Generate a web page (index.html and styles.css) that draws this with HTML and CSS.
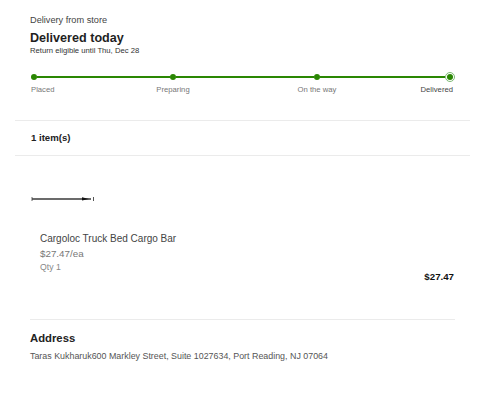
FILE: index.html
```html
<!DOCTYPE html>
<html>
<head>
<meta charset="utf-8">
<link rel="stylesheet" href="styles.css">
</head>
<body>
<div class="page">
  <div class="header">
    <div class="from">Delivery from store</div>
    <div class="title">Delivered today</div>
    <div class="return">Return eligible until Thu, Dec 28</div>
    <div class="tracker">
      <span class="dot c1"></span><span class="line c2"></span>
      <span class="dot c3"></span><span class="line c4"></span>
      <span class="dot c5"></span><span class="line c6"></span>
      <span class="ring c7"><span class="inner"></span></span>
      <span class="lbl c1 start">Placed</span>
      <span class="lbl c3 center">Preparing</span>
      <span class="lbl c5 center">On the way</span>
      <span class="lbl c7 end current">Delivered</span>
    </div>
  </div>
  <div class="count">1 item(s)</div>
  <div class="item">
    <svg class="thumb" width="64" height="10" viewBox="0 0 64 10">
      <line x1="1" y1="3" x2="1" y2="7" stroke="#666" stroke-width="1"/>
      <line x1="1" y1="5" x2="60" y2="5" stroke="#3a3a3a" stroke-width="1.4"/>
      <polygon points="51,3.2 58,5 51,6.4" fill="#111"/>
      <line x1="62.5" y1="3" x2="62.5" y2="7" stroke="#555" stroke-width="1"/>
    </svg>
    <div class="row">
      <div class="details">
        <div class="name">Cargoloc Truck Bed Cargo Bar</div>
        <div class="each">$27.47/ea</div>
        <div class="qty">Qty 1</div>
      </div>
      <div class="total">$27.47</div>
    </div>
  </div>
  <div class="address">
    <div class="addr-title">Address</div>
    <div class="addr-line">Taras Kukharuk600 Markley Street, Suite 1027634, Port Reading, NJ 07064</div>
  </div>
</div>
</body>
</html>
```

FILE: styles.css
```css
* { box-sizing: border-box; }
body {
  margin: 0;
  background: #fff;
  font-family: "Liberation Sans", Arial, sans-serif;
  color: #333;
}
.page {
  width: 455px;
  margin-left: 15px;
}
.header {
  padding: 13px 15px 0 15px;
}
.from {
  font-size: 9.2px;
  line-height: 14px;
  color: #444;
}
.title {
  margin-top: 3px;
  font-size: 12.6px;
  line-height: 16px;
  font-weight: bold;
  color: #1f1f1f;
}
.return {
  font-size: 7.7px;
  line-height: 10px;
  color: #333;
}
.tracker {
  margin-top: 16px;
  margin-left: 1px;
  display: grid;
  grid-template-columns: 6px 133fr 6px 138fr 6px 125fr 10px;
  grid-template-rows: 10px 12px;
  row-gap: 2px;
  align-items: center;
}
.c1 { grid-column: 1; }
.c2 { grid-column: 2; }
.c3 { grid-column: 3; }
.c4 { grid-column: 4; }
.c5 { grid-column: 5; }
.c6 { grid-column: 6; }
.c7 { grid-column: 7; }
.dot {
  grid-row: 1;
  width: 6px;
  height: 6px;
  border-radius: 50%;
  background: #2a8703;
}
.line {
  grid-row: 1;
  height: 2px;
  background: #2a8703;
}
.ring {
  grid-row: 1;
  width: 10px;
  height: 10px;
  border-radius: 50%;
  border: 1px solid #7dbb74;
  background: #fff;
  display: flex;
  align-items: center;
  justify-content: center;
}
.inner {
  width: 6px;
  height: 6px;
  border-radius: 50%;
  background: #2a8703;
}
.lbl {
  grid-row: 2;
  font-size: 7.7px;
  line-height: 12px;
  color: #777;
  white-space: nowrap;
  width: max-content;
}
.start { justify-self: start; }
.center { justify-self: center; }
.end { justify-self: end; margin-right: 2px; }
.current { color: #444; }
.count {
  margin-top: 24px;
  border-top: 1px solid #ebebeb;
  border-bottom: 1px solid #ebebeb;
  padding: 10px 15px 10px 16px;
  font-size: 9.6px;
  line-height: 14px;
  font-weight: bold;
  color: #222;
}
.item {
  padding: 37px 15px 0 16px;
}
.thumb {
  display: block;
  margin-top: 1px;
}
.row {
  display: flex;
  justify-content: space-between;
  align-items: flex-start;
  margin-top: 27px;
}
.details {
  padding-left: 9px;
}
.name {
  font-size: 10px;
  line-height: 15px;
  color: #444;
}
.each {
  margin-top: 1px;
  font-size: 9.8px;
  line-height: 14px;
  color: #777;
}
.qty {
  font-size: 8.7px;
  line-height: 12px;
  color: #888;
}
.total {
  padding-top: 39px;
  margin-right: 1px;
  font-size: 9.7px;
  line-height: 14px;
  font-weight: bold;
  color: #111;
}
.address {
  margin: 35px 15px 0 15px;
  border-top: 1px solid #ebebeb;
  padding-top: 10px;
}
.addr-title {
  font-size: 11.3px;
  line-height: 16px;
  font-weight: bold;
  color: #222;
}
.addr-line {
  margin-top: 4px;
  font-size: 8.9px;
  line-height: 12px;
  color: #555;
}
```
